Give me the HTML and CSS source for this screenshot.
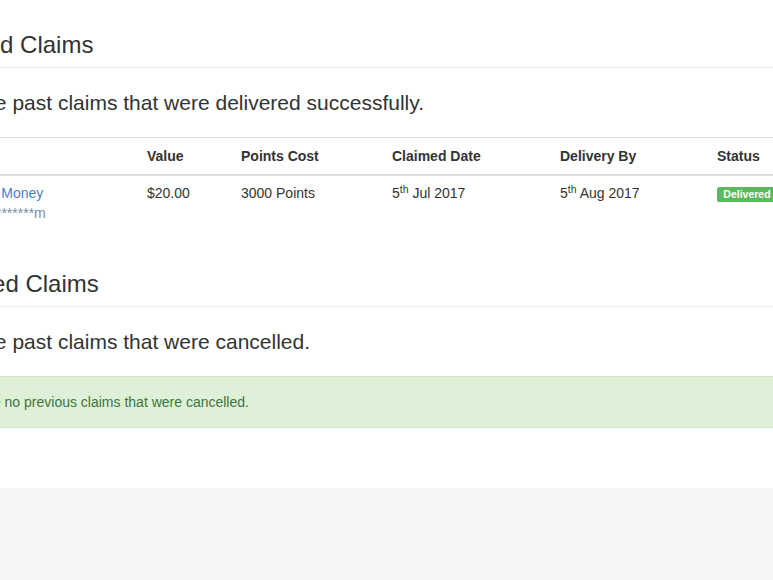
FILE: index.html
```html
<!DOCTYPE html>
<html>
  <head>
    <title>My Claims</title>
    <meta name="viewport" content="width=device-width, initial-scale=1">
    <link rel="stylesheet" href="styles.css">
  </head>
  <body>
    <div class="viewport">
      <main class="claims">
        <section class="claims-section">
          <div class="page-header">
            <h3>Delivered Claims</h3>
          </div>
          <p class="lead">Check the past claims that were delivered successfully.</p>
          <table class="claims-table">
            <thead>
              <tr>
                <th class="col-method">Method</th>
                <th class="col-value">Value</th>
                <th class="col-points">Points Cost</th>
                <th class="col-claimed">Claimed Date</th>
                <th class="col-delivery">Delivery By</th>
                <th class="col-status">Status</th>
              </tr>
            </thead>
            <tbody>
              <tr>
                <td>
                  <a class="method-link" href="#">MTN Mobile Money</a>
                  <div class="method-account">j********************m</div>
                </td>
                <td>$20.00</td>
                <td>3000 Points</td>
                <td>5<sup>th</sup> Jul 2017</td>
                <td>5<sup>th</sup> Aug 2017</td>
                <td><span class="label label-success">Delivered</span></td>
              </tr>
            </tbody>
          </table>
        </section>

        <section class="claims-section">
          <div class="page-header">
            <h3>Cancelled Claims</h3>
          </div>
          <p class="lead">Check the past claims that were cancelled.</p>
          <div class="alert alert-success">
            <svg class="alert-icon" viewBox="0 0 12 12" width="12" height="12"><path d="M1.5 6.5l3 3 6-7" fill="none" stroke="currentColor" stroke-width="2"/></svg>
            <span>There are no previous claims that were cancelled.</span>
          </div>
        </section>
      </main>
      <footer class="site-footer"></footer>
    </div>
  </body>
</html>
```

FILE: styles.css
```css
html, body {
  margin: 0;
  height: 100%;
}
body {
  font-family: "Liberation Sans", Arial, sans-serif;
  font-size: 14px;
  line-height: 1.42857;
  color: #333;
  background: #fff;
}
.viewport {
  display: flex;
  flex-direction: column;
  min-height: 100%;
  overflow: hidden;
}
.claims {
  width: 940px;
  margin-left: -88px;
  padding: 32px 0 40px;
  flex-shrink: 0;
}
.claims-section + .claims-section {
  margin-top: 39px;
}
.page-header {
  margin: 0 0 20px;
  padding-bottom: 9px;
  border-bottom: 1px solid #eee;
}
.page-header h3 {
  margin: 0;
  font-size: 24px;
  font-weight: 500;
  line-height: 1.1;
}
.lead {
  margin: 0 0 19px;
  font-size: 21px;
  font-weight: 300;
  line-height: 1.4;
}
.claims-table {
  width: 100%;
  margin-bottom: 20px;
  border-collapse: collapse;
  border-spacing: 0;
  table-layout: fixed;
}
.claims-table th,
.claims-table td {
  padding: 8px;
  text-align: left;
  vertical-align: top;
  border-top: 1px solid #ddd;
}
.claims-table th {
  padding-top: 9px;
  padding-bottom: 7px;
  font-weight: bold;
  border-bottom: 2px solid #ddd;
}
.claims-table td {
  border-top: 0;
}
.claims-table td:first-child {
  padding-left: 10px;
}
.col-method { width: 211px; }
.col-value { width: 78px; }
.col-points { width: 135px; }
.col-claimed { width: 152px; }
.col-delivery { width: 141px; }
.claims-table sup {
  font-size: 75%;
  line-height: 0;
  position: relative;
  top: -0.5em;
  vertical-align: baseline;
}
.method-link {
  color: #4d80bd;
  text-decoration: none;
}
.method-account {
  color: #7d8ca6;
}
.label {
  display: inline-block;
  padding: 0.2em 0.6em 0.3em;
  font-size: 75%;
  font-weight: bold;
  line-height: 1;
  color: #fff;
  white-space: nowrap;
  border-radius: 0.25em;
}
.label-success {
  background: #5cb85c;
}
.alert {
  display: flex;
  align-items: center;
  margin-bottom: 20px;
  padding: 16px 15px 14px;
  border: 1px solid transparent;
  border-radius: 4px;
}
.alert-success {
  color: #3c763d;
  background: #dff0d8;
  border-color: #d6e9c6;
}
.alert-icon {
  flex-shrink: 0;
}
.site-footer {
  flex: 1;
  min-height: 92px;
  background: #f5f5f5;
}
```
